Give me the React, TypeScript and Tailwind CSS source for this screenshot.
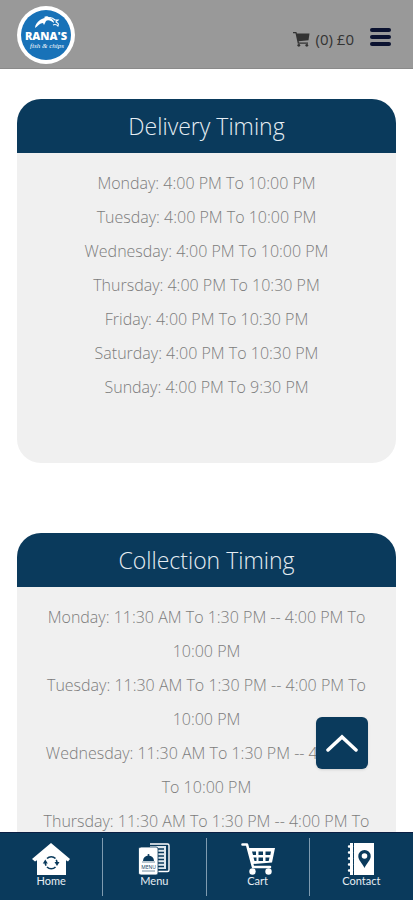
import type { ReactNode } from "react";

const DELIVERY = [
  "Monday: 4:00 PM To 10:00 PM",
  "Tuesday: 4:00 PM To 10:00 PM",
  "Wednesday: 4:00 PM To 10:00 PM",
  "Thursday: 4:00 PM To 10:30 PM",
  "Friday: 4:00 PM To 10:30 PM",
  "Saturday: 4:00 PM To 10:30 PM",
  "Sunday: 4:00 PM To 9:30 PM",
];

const COLLECTION = [
  "Monday: 11:30 AM To 1:30 PM -- 4:00 PM To 10:00 PM",
  "Tuesday: 11:30 AM To 1:30 PM -- 4:00 PM To 10:00 PM",
  "Wednesday: 11:30 AM To 1:30 PM -- 4:00 PM To 10:00 PM",
  "Thursday: 11:30 AM To 1:30 PM -- 4:00 PM To 10:30 PM",
];

function Logo() {
  return (
    <svg viewBox="0 0 58 58" className="size-[58px]" role="img" aria-label="Rana's fish and chips">
      <circle cx="29" cy="29" r="29" fill="#fff" />
      <circle cx="29" cy="29" r="25" fill="#1872b8" />
      <path
        d="M18 22c0-3 2-6 5-8 2-1 3-2 5-2l-1-1c2-1 4-1 6 1 3 1 4 3 4 5l-3-2c-2-1-4-1-5 0l-2 4-1-2c-3 0-5 3-8 5z"
        fill="#fff"
      />
      <path
        d="M31 12c3-1 5 0 7 2l3 0c-1 1-2 1-2 2 2 1 3 2 2 4-2-2-3-2-5-1"
        fill="none"
        stroke="#fff"
        strokeWidth="1.100"
      />
      <text
        x="29"
        y="34"
        textAnchor="middle"
        className="fill-white font-['Open_Sans',sans-serif] text-[11px] font-extrabold"
      >
        RANA'S
      </text>
      <text
        x="30"
        y="42"
        textAnchor="middle"
        className="fill-white font-['Liberation_Serif',serif] text-[7px] italic"
      >
        fish &amp; chips
      </text>
    </svg>
  );
}

function CartGlyph() {
  return (
    <svg viewBox="0 0 17 16" className="h-4 w-[17px]" fill="#333" aria-hidden="true">
      <path d="M0 1h3.4l.5 1.600H16.500l-1 6.600-9.800 1 .3 1.300H15v1.300H4.800L2.500 2.300H0z" />
      <circle cx="5.800" cy="14.300" r="1.400" />
      <circle cx="13.800" cy="14.300" r="1.400" />
    </svg>
  );
}

function HomeIcon() {
  return (
    <svg viewBox="0 0 40 32" className="h-8 w-10" aria-hidden="true">
      <path d="M20 0 39 16l-2 2.500-2-1.200V32H6V17.300l-2 1.200L1 16z" fill="#fff" />
      <g fill="none" stroke="#0a3a5c" strokeWidth="1.600">
        <path d="M16 15.500a6 6 0 0 1 8.500 0M24.500 24a6 6 0 0 1-8.500 0M14.300 19.500a6 6 0 0 0 .8 3.200M26 20a6 6 0 0 0-.8-3.200" />
      </g>
      <path d="M11.800 20.500h5l-2.500-4zM23.500 19h5l-2.500 4z" fill="#0a3a5c" />
    </svg>
  );
}

function MenuIcon() {
  return (
    <svg viewBox="0 0 32 32" className="size-8" aria-hidden="true">
      <path d="M12 1h17.500q1.500 0 1.500 1.500V27q0 1.500-1.500 1.500H20" fill="none" stroke="#fff" strokeWidth="1.400" />
      <path d="M12 3h16v23H12z" fill="#dfe8ee" />
      <path
        d="M20 6h6M20 9.500h6M20 13h6M20 16.500h6M20 20h6M20 23.500h6"
        stroke="#0a3a5c"
        strokeWidth="1.600"
      />
      <path
        d="M2 4h16q2 0 2 2v24q0 2-2 2H3q-2.500 0-2.500-2V6q0-2 2-2z"
        fill="#fff"
        stroke="#0a3a5c"
        strokeWidth=".8"
      />
      <path d="M5 18a5.500 5.500 0 0 1 11 0z" fill="#0a3a5c" />
      <circle cx="10.500" cy="12" r="1" fill="#0a3a5c" />
      <path d="M4 19h13M4 28h13" stroke="#0a3a5c" strokeWidth=".8" opacity=".7" />
      <text
        x="10.500"
        y="25.500"
        textAnchor="middle"
        className="fill-[#0a3a5c] font-['Open_Sans',sans-serif] text-[5px]"
      >
        MENU
      </text>
    </svg>
  );
}

function CartIcon() {
  return (
    <svg viewBox="0 0 34 32" className="h-8 w-[34px]" fill="none" aria-hidden="true">
      <path
        d="M1.500 1.500H6l6 22.500h17"
        stroke="#fff"
        strokeWidth="2.600"
        strokeLinecap="round"
        strokeLinejoin="round"
      />
      <path d="M7.500 5H34l-3 14.500-19 1.500z" fill="#fff" />
      <path
        d="M11 8.500h4v3.500h-3zM17.500 8.500h4.500V12h-4.500zM24.500 8.500h5.500l-.7 3.500h-4.800zM12.500 14.500h3V18h-2zM17.500 14.500h4.500V18h-4.500zM24.500 14.500h4l-.8 3.500h-3.200z"
        fill="#0a3a5c"
      />
      <circle cx="11.500" cy="28.500" r="3.200" fill="#fff" />
      <circle cx="27.500" cy="28.500" r="3.200" fill="#fff" />
    </svg>
  );
}

function ContactIcon() {
  return (
    <svg viewBox="0 0 28 32" className="h-8 w-7" aria-hidden="true">
      <path d="M3 0h3v32H3zM7 0h20v32H7z" fill="#fff" />
      <path
        d="M2 3.500h3M2 9.500h3M2 15.500h3M2 21.500h3M2 27.500h3"
        stroke="#fff"
        strokeWidth="2.400"
        strokeLinecap="round"
      />
      <path
        d="M17.500 7a6.200 6.200 0 0 1 6.200 6.200c0 4-4 7-6.200 11.800-2.200-4.800-6.200-7.800-6.200-11.800A6.200 6.200 0 0 1 17.500 7z"
        fill="#0a3a5c"
      />
      <circle cx="17.500" cy="13" r="2.800" fill="#fff" />
    </svg>
  );
}

const TABS: { label: string; icon: ReactNode }[] = [
  { label: "Home", icon: <HomeIcon /> },
  { label: "Menu", icon: <MenuIcon /> },
  { label: "Cart", icon: <CartIcon /> },
  { label: "Contact", icon: <ContactIcon /> },
];

function TimingCard({ title, rows }: { title: string; rows: string[] }) {
  return (
    <section className="min-h-[364px] shrink-0 overflow-hidden rounded-3xl bg-[#f0f0f0] text-center">
      <h2 className="bg-[#0a3a5c] text-[23px] leading-[54px] font-light text-[#e6edf3]">{title}</h2>
      <ul className="px-6 pt-[13px] pb-12 text-base leading-[34px] font-light text-[#7c7c7c]">
        {rows.map((row) => (
          <li key={row}>{row}</li>
        ))}
      </ul>
    </section>
  );
}

export default function App() {
  return (
    <div className="flex h-dvh flex-col bg-white font-['Open_Sans',sans-serif]">
      <header className="flex shrink-0 items-center border-b border-[#8a8a8a] bg-[#999] pt-1.5 pr-[22px] pb-1 pl-[17px]">
        <a href="#home">
          <Logo />
        </a>
        <a href="#cart" className="mt-2 ml-auto flex items-center gap-1.5 text-[15px] text-[#333]">
          <CartGlyph />
          <span>(0) £0</span>
        </a>
        <button type="button" aria-label="Open menu" className="mt-1 ml-4 flex w-[21px] flex-col gap-[3px]">
          <span className="h-1 rounded-sm bg-[#0b1230]" />
          <span className="h-1 rounded-sm bg-[#0b1230]" />
          <span className="h-1 rounded-sm bg-[#0b1230]" />
        </button>
      </header>

      <div className="relative min-h-0 flex-1">
        <main className="flex h-full flex-col gap-[70px] overflow-y-auto px-[17px] pt-[30px] [scrollbar-width:none]">
          <TimingCard title="Delivery Timing" rows={DELIVERY} />
          <TimingCard title="Collection Timing" rows={COLLECTION} />
        </main>
        <button
          type="button"
          aria-label="Back to top"
          className="absolute right-[45px] bottom-[63px] flex size-[52px] items-center justify-center rounded-md bg-[#0a3a5c] shadow"
        >
          <svg viewBox="0 0 32 18" className="h-[18px] w-8" fill="none" aria-hidden="true">
            <path d="m2 16 14-13 14 13" stroke="#fff" strokeWidth="3.500" strokeLinecap="round" />
          </svg>
        </button>
      </div>

      <nav className="shrink-0 border-t border-[#0a1f44] bg-[#0a3a5c] pt-[5px] pb-1">
        <ul className="grid grid-cols-4 divide-x divide-[#7f9bb0]">
          {TABS.map((tab) => (
            <li key={tab.label}>
              <a
                href={`#${tab.label.toLowerCase()}`}
                className="flex h-[58px] flex-col items-center pt-[5px] font-['Lato',sans-serif] text-[11px] leading-[11px] text-[#e6edf3]"
              >
                {tab.icon}
                {tab.label}
              </a>
            </li>
          ))}
        </ul>
      </nav>
    </div>
  );
}
